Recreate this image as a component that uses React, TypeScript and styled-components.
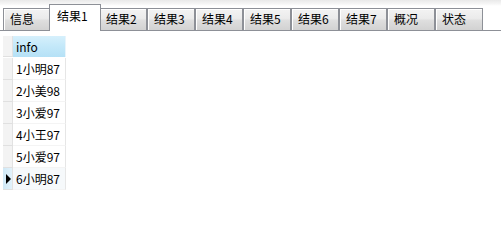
import React from "react";
import styled, { createGlobalStyle } from "styled-components";

const Global = createGlobalStyle`
  html, body { margin: 0; padding: 0; background: #ffffff; }
  body { width: 501px; height: 201px; overflow: hidden; font-family: "Noto Sans CJK SC", "Microsoft YaHei", sans-serif; }
`;

const Page = styled.div`
  width: 501px;
  height: 201px;
  background: #ffffff;
  display: flex;
  flex-direction: column;
`;

const TabStrip = styled.div`
  height: 30px;
  display: flex;
  align-items: flex-end;
  padding-left: 3px;
  border-bottom: 1px solid #8d9097;
  background: linear-gradient(to bottom, #e9e9e9 0px, #f6f6f6 4px, #ffffff 6px);
`;

const Tab = styled.div<{ $active?: boolean }>`
  position: relative;
  box-sizing: border-box;
  display: flex;
  align-items: center;
  width: ${(p) => (p.$active ? 52 : 48)}px;
  height: ${(p) => (p.$active ? 27 : 22)}px;
  margin: ${(p) => (p.$active ? "0 -2px -1px -2px" : "0")};
  padding: ${(p) => (p.$active ? "0 0 4px 7px" : "0 0 1px 6px")};
  border: 1px solid #8d9097;
  border-bottom-width: 0;
  background: ${(p) =>
    p.$active
      ? "#ffffff"
      : "linear-gradient(to bottom, #f3f3f3 0%, #ebebeb 45%, #dedede 55%, #d2d2d2 100%)"};
  box-shadow: ${(p) => (p.$active ? "none" : "inset 1px 1px 0 #ffffff")};
  z-index: ${(p) => (p.$active ? 2 : 1)};
  font-size: 12px;
  line-height: 16px;
  color: #000000;
  white-space: nowrap;
`;

const Grid = styled.div`
  padding: 5px 0 0 3px;
  display: grid;
  grid-template-columns: 10px 53px;
  grid-auto-rows: 22px;
  align-self: flex-start;
`;

const RowHeader = styled.div<{ $current?: boolean; $corner?: boolean }>`
  box-sizing: border-box;
  height: ${(p) => (p.$corner ? 21 : 22)}px;
  border-bottom: 1px solid #e0e0e0;
  border-right: 1px solid #e2e2e2;
  background: ${(p) =>
    p.$current ? "linear-gradient(to right, #cfe8f6, #e2f2fb)" : "#f3f3f3"};
  display: flex;
  align-items: center;
  justify-content: center;
`;

const Arrow = styled.span`
  width: 0;
  height: 0;
  border-top: 5px solid transparent;
  border-bottom: 5px solid transparent;
  border-left: 5px solid #000000;
  margin-left: 1px;
`;

const HeaderCell = styled.div`
  box-sizing: border-box;
  height: 21px;
  padding-left: 3px;
  display: flex;
  align-items: center;
  font-size: 12px;
  color: #000000;
  background: linear-gradient(to bottom, #d6f0fc 0%, #c3e8f9 50%, #b5e1f6 100%);
  border-right: 1px solid #e8f4fb;
`;

const Cell = styled.div<{ $current?: boolean }>`
  box-sizing: border-box;
  height: 22px;
  padding-left: 3px;
  display: flex;
  align-items: center;
  font-size: 12px;
  color: #000000;
  background: ${(p) => (p.$current ? "#f6f9fb" : "#ffffff")};
  border-right: 1px solid #e6e6e6;
  border-bottom: 1px solid #f4f4f4;
`;

const tabs = ["信息", "结果1", "结果2", "结果3", "结果4", "结果5", "结果6", "结果7", "概况", "状态"];
const rows = ["1小明87", "2小美98", "3小爱97", "4小王97", "5小爱97", "6小明87"];

export default function App() {
  return (
    <Page>
      <Global />
      <TabStrip>
        {tabs.map((t, i) => (
          <Tab key={t} $active={i === 1}>
            {t}
          </Tab>
        ))}
      </TabStrip>
      <Grid>
        <RowHeader $corner />
        <HeaderCell>info</HeaderCell>
        {rows.map((r, i) => {
          const cur = i === rows.length - 1;
          return (
            <React.Fragment key={r}>
              <RowHeader $current={cur}>{cur && <Arrow />}</RowHeader>
              <Cell $current={cur}>{r}</Cell>
            </React.Fragment>
          );
        })}
      </Grid>
    </Page>
  );
}
